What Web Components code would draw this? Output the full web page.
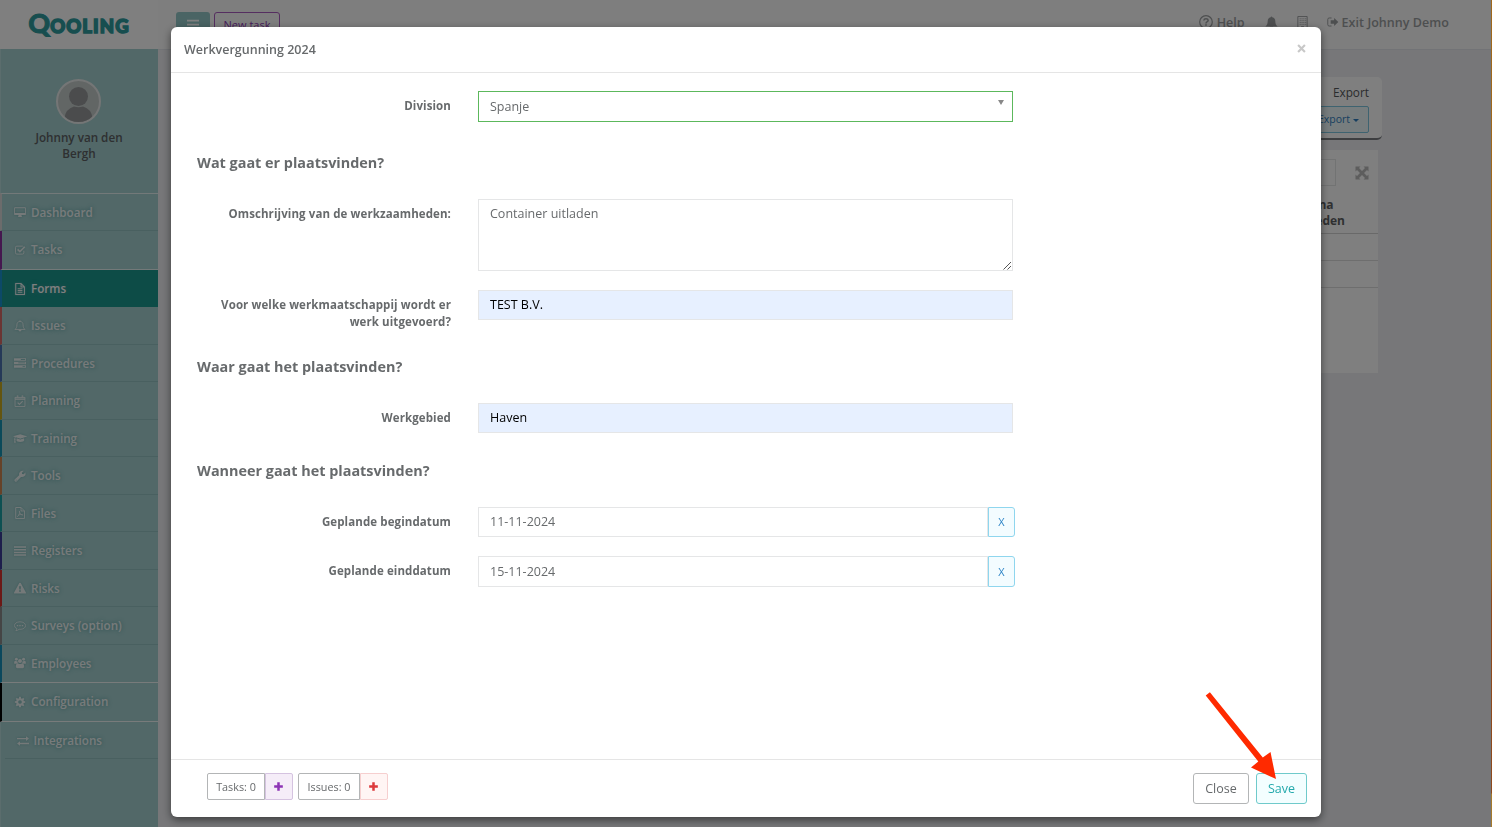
<!DOCTYPE html>
<html lang="nl">
<head>
<meta charset="utf-8">
<title>Werkvergunning 2024</title>
<style>
  html, body { margin: 0; height: 100%; overflow: hidden; }
  body {
    font-family: "Open Sans", "Noto Sans", sans-serif;
    font-size: 12px;
    color: #676a6c;
    background: linear-gradient(#a0681c 0, #a0681c 560px, #8f4a1c 600px, #8f4a1c 793px, #a67a2c 794px);
  }
</style>
</head>
<body>
<app-shell>
  <side-nav slot="nav" user="Johnny van den Bergh"></side-nav>
  <top-bar slot="top"></top-bar>
  <forms-page slot="page"></forms-page>
</app-shell>

<modal-dialog heading="Werkvergunning 2024">
  <form-row label="Division"><form-field kind="select" value="Spanje"></form-field></form-row>
  <section-title style="--gap: 31px">Wat gaat er plaatsvinden?</section-title>
  <form-row label="Omschrijving van de werkzaamheden:"><form-field kind="area" value="Container uitladen"></form-field></form-row>
  <form-row label="Voor welke werkmaatschappij wordt er werk uitgevoerd?" style="margin-top: 19px"><form-field kind="filled" value="TEST B.V."></form-field></form-row>
  <section-title style="--gap: 27px">Waar gaat het plaatsvinden?</section-title>
  <form-row label="Werkgebied"><form-field kind="filled" value="Haven"></form-field></form-row>
  <section-title style="--gap: 28px">Wanneer gaat het plaatsvinden?</section-title>
  <form-row label="Geplande begindatum"><form-field kind="date" value="11-11-2024"></form-field></form-row>
  <form-row label="Geplande einddatum" style="margin-top: 19px"><form-field kind="date" value="15-11-2024" style="--h: 31px; --pb: 0"></form-field></form-row>

  <count-button slot="left" label="Tasks: 0" style="--fg: #8d35b5; --bg: #f5edf8; --line: #d5c3e0; --w: 57px"></count-button>
  <count-button slot="left" label="Issues: 0" style="--fg: #dc3a3c; --bg: #fff5f4; --line: #f6cfcf; --w: 61px"></count-button>
  <action-button slot="right" style="--w: 54px">Close</action-button>
  <action-button slot="right" style="--w: 49px; --fg: #23a9ac; --bg: #f3feff; --line: #6fcacb">Save</action-button>
</modal-dialog>
<pointer-arrow></pointer-arrow>

<script>
/* Icons, all drawn on a 14 unit grid */
const ICONS = {
  desktop: '<path fill-rule="evenodd" d="M1.2 1.5h11.6q1.1 0 1.1 1.1v7q0 1-1.1 1H8.7q.1.8.5 1.4v.7H4.8V12q.4-.6.5-1.4H1.2q-1.1 0-1.1-1v-7q0-1.100 1.100-1.100zM1.100 2.600v5.600h11.800V2.600z"/>',
  check: '<path fill="none" stroke="currentColor" stroke-width="1.100" d="M11.500 7.800v2.400q0 1.600-1.600 1.600H3.300q-1.600 0-1.600-1.600V4.100q0-1.600 1.600-1.600h6.600q.5 0 .9.200"/><path fill="none" stroke="currentColor" stroke-width="1.900" d="M4.200 6.200l2.700 2.700 5.700-5.700"/>',
  file: '<path fill="none" stroke="currentColor" stroke-width="1.200" d="M2 .6h6.200l4 4v8.800H2zM8.200.6v4h4M4.300 6.700h5.500M4.300 8.700h5.500M4.300 10.700h5.500"/>',
  bell: '<path fill="none" stroke="currentColor" stroke-width="1.100" d="M7 1.700c-2.600 0-3.600 2-3.600 3.900 0 2.900-.8 4.100-2.300 5.400h11.800c-1.500-1.300-2.300-2.500-2.300-5.400C10.600 3.700 9.600 1.700 7 1.700z"/><path d="M6.400.4h1.200v1.400H6.400zM5.200 11.500h3.600q0 1.900-1.800 1.900t-1.800-1.900z"/>',
  bellSolid: '<path d="M7 .5q.8 0 .8.9c2.400.5 3.300 2.300 3.300 4.200 0 3 .9 4.300 2.400 5.700H.5c1.500-1.400 2.400-2.700 2.400-5.700 0-1.900.9-3.700 3.300-4.200q0-.9.800-.9zM5.200 11.700h3.600q0 1.900-1.800 1.900t-1.800-1.900z"/>',
  tasks: '<path fill-rule="evenodd" d="M0 1.500h14v2.900H0zM8 2.400v1h5v-1zM0 5.500h14v2.900H0zM5 6.400v1h8v-1zM0 9.500h14v2.900H0zM10 10.400v1h3v-1z"/>',
  calendar: '<path fill="none" stroke="currentColor" d="M1.200 2.700h11.600v10.700H1.200zM1.200 5.200h11.600"/><path fill="none" stroke="currentColor" stroke-width="1.300" d="M4.300 8.900l2 2 3.800-3.800"/><path d="M3.200.3h1.900v3.600H3.200zM8.900.3h1.900v3.600H8.900zM1 2.500h12v1.800H1z" opacity=".8"/>',
  cap: '<path d="M8.500 2.500L17 5.100 8.500 7.800 3.200 6.100Q2.700 6.600 2.600 7.600q.5.300.5.900 0 .5-.4.800l.5 3.200H1.300l.4-3.200q-.4-.3-.4-.8 0-.6.4-.9 0-1.200.5-1.900L0 5.100zM4.200 7.400l4.300 1.400 4.400-1.400.2 2.300q-.4 1.900-4.600 1.900T4 9.700z"/>',
  wrench: '<path fill-rule="evenodd" d="M.7 11.200l5.200-5.200Q5.400 3.500 7.100 1.900 8.900.3 11.500 1L9.200 3.200l.3 1.500 1.600.3L13.400 2.800Q14 5.500 12.300 7.100 10.600 8.700 8.200 8.100L3 13.300q-.9.700-1.600 0L.7 12.700q-.6-.8 0-1.500zM2 11.300v1h1v-1z"/>',
  pdf: '<path fill="none" stroke="currentColor" stroke-width="1.100" d="M2 .6h6.200l4 4v8.800H2zM8.200.6v4h4"/><path fill="none" stroke="currentColor" stroke-width=".9" d="M6.300 4.600c.2 2.800 1.200 4.300 4.200 4.900M6.700 5c0 2.600-1 4.900-3 6.600M4.600 9.700q2.600-1.300 5.400-1"/>',
  lines: '<path d="M0 1.600h14v1.700H0zM0 4.700h14v1.700H0zM0 7.800h14v1.700H0zM0 10.900h14v1.700H0z"/>',
  warning: '<path fill-rule="evenodd" d="M7 .8q.6 0 .9.500l6 11q.5 1-.6 1.100H.7q-1.100-.1-.6-1.100l6-11Q6.400.8 7 .8zM6 4.900l.3 3.900h1.400L8 4.900zM6.100 9.700v1.700h1.800V9.700z"/>',
  comment: '<path fill="none" stroke="currentColor" d="M7 2.100c3.700 0 6.500 1.900 6.500 4.400S10.700 10.900 7 10.900l-1-.1q-1.600 1.400-3.800 1.700.9-1 1.200-2.400Q.5 8.800.5 6.500C.5 4 3.300 2.100 7 2.100z"/><path d="M3.300 5.700h1.600v1.600H3.300zM6.200 5.700h1.600v1.600H6.200zM9.100 5.700h1.600v1.600H9.100z"/>',
  users: '<circle cx="2.800" cy="2.700" r="1.700"/><circle cx="11.200" cy="2.700" r="1.700"/><circle cx="7" cy="4.700" r="2.400"/><path d="M.2 7.500C0 5.300.6 4.300 1.500 4.500q1.300.8 2.500.3-.1 1.500.7 2.300Q3.300 7.200 2.600 8H1Q.3 8 .2 7.500zM13.800 7.500c.2-2.200-.4-3.200-1.300-3q-1.300.8-2.500.3.100 1.500-.7 2.300 1.400.1 2.100.9H13q.7 0 .8-.5zM4.200 7.300Q7 9 9.800 7.300q2 0 2 4.100 0 1.700-1.700 1.700H3.900q-1.700 0-1.700-1.700 0-4.100 2-4.100z"/>',
  cog: '<path fill-rule="evenodd" d="M6 1h2l.3 1.700 1 .4 1.400-1L12.100 3.500l-1 1.400.4 1L13 6.100v1.900l-1.600.3-.4 1 1 1.400-1.300 1.300-1.400-1-1 .4L8 13H6l-.3-1.600-1-.4-1.400 1L2 10.700l1-1.400-.4-1L1 8V6.100l1.600-.3.400-1-1-1.300L3.300 2.100l1.400 1 1-.4zM7 4.900a2.100 2.100 0 1 0 0 4.200 2.100 2.100 0 1 0 0-4.200z"/>',
  exchange: '<path d="M0 3.400h10.500V1.500L14 4.200l-3.500 2.700V5.100H0zM14 9H3.500V7.200L0 9.900l3.500 2.600v-1.800H14z"/>',
  help: '<circle cx="7" cy="7" r="6.300" fill="none" stroke="currentColor" stroke-width="1.200"/><path fill="none" stroke="currentColor" stroke-width="1.500" d="M4.800 5.500Q5 3.700 7 3.700t2.200 1.600Q9.200 6.300 8 6.900q-1 .5-1 1.500"/><path d="M6.200 9.200h1.600v1.600H6.200z"/>',
  building: '<path fill="none" stroke="currentColor" d="M2 .5h10v13H2z"/><path fill="none" stroke="currentColor" stroke-dasharray="1 1" d="M4 3h7M4 5h7M4 7h7M4 9h7"/><path d="M5.500 11h3v2.500h-3z"/>',
  exit: '<path fill="none" stroke="currentColor" stroke-width="1.100" d="M5.300 2.300H2.600Q.9 2.300.9 4v6q0 1.700 1.700 1.700h2.700"/><path d="M4.300 5.100h4V2.200L13.200 7l-4.900 4.800V8.900h-4z"/>',
  expand: '<path d="M.5 5.500v-5h5L4 2l3 3 3-3L8.500.5h5v5L12 4 9 7l3 3 1.500-1.500v5h-5L10 12 7 9l-3 3 1.500 1.500h-5v-5L2 10l3-3-3-3z"/>',
  plus: '<path d="M5.400 1.500h3.200v3.900h3.900v3.200H8.600v3.900H5.400V8.600H1.500V5.400h3.900z"/>'
};

function icon(name, size) {
  var wide = name === "cap";
  var w = wide ? size * 17 / 14 : size;
  return `<svg class="icon ${name}" width="${w}" height="${size}" viewBox="0 0 ${wide ? 17 : 14} 14" fill="currentColor">${ICONS[name]}</svg>`;
}

/* Base class: open shadow root, filled once on connect */
class UiElement extends HTMLElement {
  constructor() {
    super();
    this.attachShadow({ mode: "open" });
  }
  attr(name) { return this.getAttribute(name) || ""; }
  connectedCallback() {
    this.shadowRoot.innerHTML = `<style>*{box-sizing:border-box}svg{display:block;flex:none}${this.styles()}</style>${this.view()}`;
  }
}

class AppShell extends UiElement {
  styles() {
    return `
      :host {
        display: grid;
        grid-template: 50px 1fr / 158px 1fr;
        height: 827px;
        margin-right: 1px;
      }
      slot[name=nav]::slotted(*) { grid-row: 1 / 3; }
    `;
  }
  view() {
    return `<slot name="nav"></slot><slot name="top"></slot><slot name="page"></slot>`;
  }
}

class SideNav extends UiElement {
  styles() {
    return `
      :host { display: flex; flex-direction: column; background: #a4d0d0; box-shadow: inset 1px 0 #b6dada; }
      .logo {
        height: 49px; display: flex; align-items: center; justify-content: center;
        background: #fff; color: #2f9c9f;
      }
      .logo span {
        font: 900 18.500px/1 Lato, "Open Sans", sans-serif; letter-spacing: 1.100px;
        -webkit-text-stroke: 1.500px #2f9c9f; padding-bottom: 4px;
      }
      .logo b { font-size: 27px; font-weight: 900; letter-spacing: 0; -webkit-text-stroke-width: .9px; }
      .user {
        height: 144px; padding-top: 30px;
        display: flex; flex-direction: column; align-items: center;
      }
      .user svg { margin-right: 1px; }
      .user p {
        width: 110px; margin: 5px 0 0; text-align: center;
        font-weight: 600; line-height: 16px; font-size: 11.700px; color: #5d6163;
      }
      .item {
        display: flex; align-items: center; gap: 5px; height: 37.5px;
        padding: 1px 0 0 12px; border-left: 2px solid var(--c);
        border-bottom: 1px solid #93c0c0;
        color: #f0f6f6; font-weight: 600; font-size: 11.650px;
        text-shadow: 0 0 4px #4f9a9c;
      }
      .icon { color: #eaf3f3; filter: drop-shadow(0 0 1px #6fb0b1); }
      .icon.cap { margin: 0 -1.300px; }
      .first { border-top: 1px solid #e6f3f3; height: 38px; padding-top: 0; }
      .check-row { height: 39px; border-bottom-color: #e6f3f3; padding: 0 0 1px 12px; }
      .active { height: 37px; background: #1a988e; color: #fff; border-bottom-color: #1a988e; }
      .emp { height: 38.5px; padding-top: 0; border-bottom-color: #f0f7f7; }
      .conf { height: 39px; border-bottom-color: #f0f7f7; padding: 0 0 1px 12px; }
      .sub { margin-left: 5px; border-left: 0; padding-left: 11.500px; height: 37px; }
    `;
  }
  view() {
    var items = [
      ["desktop", "Dashboard", "#d8d8d8", "first"],
      ["check", "Tasks", "#8a2f9e", "check-row"],
      ["file", "Forms", "#1893d0", "active"],
      ["bell", "Issues", "#d66a66", ""],
      ["tasks", "Procedures", "#4a72b0", ""],
      ["calendar", "Planning", "#c9ab1e", ""],
      ["cap", "Training", "#1595b5", ""],
      ["wrench", "Tools", "#cc8450", ""],
      ["pdf", "Files", "#1aa0a5", ""],
      ["lines", "Registers", "#3a3c98", ""],
      ["warning", "Risks", "#d8322c", ""],
      ["comment", "Surveys (option)", "#8a8a8a", ""],
      ["users", "Employees", "#1590bb", "emp"],
      ["cog", "Configuration", "#000", "conf"],
      ["exchange", "Integrations", "#a4d0d0", "sub"]
    ];
    return `
      <div class="logo"><span><b>Q</b>OOLING</span></div>
      <div class="user">
        <svg width="45" height="45" viewBox="0 0 45 45">
          <defs><clipPath id="face"><circle cx="22.500" cy="22.500" r="20.500"/></clipPath></defs>
          <circle cx="22.500" cy="22.500" r="21.500" fill="#c5cccb" stroke="#e9ecec" stroke-width="2"/>
          <g clip-path="url(#face)" fill="#96999b">
            <circle cx="22.500" cy="17.500" r="9.500"/>
            <path d="M8.500 45V39q1-9 9.500-11.500 4.500 1.500 9 0Q35.500 30 36.500 39v6z"/>
          </g>
        </svg>
        <p>${this.attr("user")}</p>
      </div>
      ${items.map(i => `<div class="item ${i[3]}" style="--c:${i[2]}">${icon(i[0], 12)}<span>${i[1]}</span></div>`).join("")}
    `;
  }
}

class TopBar extends UiElement {
  styles() {
    return `
      :host {
        display: flex; align-items: center; height: 50px; box-sizing: border-box;
        padding: 0 42px 5px 18px; background: #fcfcfc; border-bottom: 1px solid #e4e7ec;
      }
      .menu {
        width: 34px; height: 27px; margin-top: 7px; border-radius: 3px; padding-bottom: 2px;
        background: #94c9c9; color: #fff;
        display: flex; align-items: center; justify-content: center;
      }
      .new {
        width: 66px; height: 27px; margin: 7px auto 0 4px; padding-bottom: 2px;
        display: flex; align-items: center; justify-content: center;
        border: 1px solid #ab5cc0; border-radius: 3px; color: #8d35b5; font-size: 11px;
      }
      .link {
        display: flex; align-items: center; gap: 4px;
        color: #9b9ea0; font-weight: 600; font-size: 12.500px;
      }
    `;
  }
  view() {
    return `
      <div class="menu"><svg width="12" height="12" viewBox="0 0 14 14" fill="currentColor"><path d="M0 1h14v2H0zM0 5.500h14v2H0zM0 10h14v2H0z"/></svg></div>
      <div class="new">New task</div>
      <div class="link">${icon("help", 14)}Help</div>
      <div class="link" style="margin-left:20px">${icon("bellSolid", 13)}</div>
      <div class="link" style="margin-left:18px">${icon("building", 13)}</div>
      <div class="link" style="margin-left:18px;gap:3px">${icon("exit", 12)}<span style="letter-spacing:.05px">Exit Johnny Demo</span></div>
    `;
  }
}

class FormsPage extends UiElement {
  styles() {
    return `
      :host { display: flex; flex-direction: column; align-items: flex-end; padding: 27px 108px 0 18px; background: #eeeff3; }
      .tools {
        width: 300px; height: 63px; padding: 7px 13px 0; margin-right: 1px; background: #fff;
        border-radius: 5px; border-bottom: 2px solid #7a7d80;
        display: flex; flex-direction: column; align-items: flex-end; gap: 6px; color: #55585a;
      }
      .tools span { line-height: 16px; font-size: 11.800px; }
      .btn {
        display: flex; align-items: center; gap: 3px; height: 27px; padding: 0 9px 1px;
        border: 1px solid #7cc6e0; border-radius: 2px; background: #eefafc;
        color: #2f7fc0; font-size: 10.500px;
      }
      .btn::after { content: ""; margin-top: 2px; border: 3px solid transparent; border-top-color: #2f7fc0; border-bottom: 0; }
      .table { width: 300px; height: 223px; margin: 10px 5px 0 0; background: #fff; }
      .search { display: flex; align-items: center; justify-content: flex-end; gap: 19px; padding: 9px 9px 0 0; color: #bbb; }
      .search i { width: 100px; height: 27px; border: 1px solid #e5e6e7; }
      .th {
        height: 48px; padding: 11px 33px 0 0; border-bottom: 1px solid #d2d2d2;
        display: flex; justify-content: flex-end;
        font-weight: 700; line-height: 16px; color: #5e6163;
      }
      .td { height: 27px; border-bottom: 1px solid #dcdcdc; }
    `;
  }
  view() {
    return `
      <div class="tools"><span>Export</span><div class="btn">Export</div></div>
      <div class="table">
        <div class="search"><i></i>${icon("expand", 14)}</div>
        <div class="th"><div>&nbsp;na<br>eden</div></div>
        <div class="td"></div><div class="td"></div>
      </div>
    `;
  }
}

class ModalDialog extends UiElement {
  styles() {
    return `
      :host {
        position: fixed; inset: 0 1px 0 0; display: flex; box-sizing: border-box;
        padding: 27px 170px 10px 171px; background: rgba(0, 0, 0, .5);
      }
      .dialog {
        flex: 1; display: flex; flex-direction: column;
        background: #fff; border-radius: 6px; box-shadow: 0 3px 9px rgba(0, 0, 0, .5);
      }
      header {
        height: 46px; padding: 0 15px 0 13px; border-bottom: 1px solid #e5e5e5;
        display: flex; align-items: center; justify-content: space-between;
        font-weight: 600; font-size: 12.500px;
      }
      header svg { margin-bottom: 3px; }
      main { flex: 1; padding: 18px 26px; }
      footer {
        height: 58px; padding: 13px 14px 0 36px; border-top: 1px solid #e5e5e5;
        display: flex; align-items: flex-start; gap: 5px;
      }
      footer span { flex: 1; }
      slot[name=right]::slotted(*) { margin-left: 2px; }
    `;
  }
  view() {
    return `
      <div class="dialog">
        <header>${this.attr("heading")}
          <svg width="9" height="9" viewBox="0 0 10 10" stroke="#c8c8c8" stroke-width="2.400"><path d="M1.200 1.200l7.600 7.600M8.800 1.200L1.200 8.800"/></svg>
        </header>
        <main><slot></slot></main>
        <footer><slot name="left"></slot><span></span><slot name="right"></slot></footer>
      </div>
    `;
  }
}

class SectionTitle extends UiElement {
  styles() {
    return `
      :host { display: block; margin: var(--gap) 0 27px; height: 19px; line-height: 19px; font-size: 14.400px; font-weight: 700; }
    `;
  }
  view() { return `<slot></slot>`; }
}

class FormRow extends UiElement {
  styles() {
    return `
      :host { display: grid; grid-template-columns: 254px 1fr; column-gap: 27px; }
      label { text-align: right; font-weight: 700; font-size: 11.500px; letter-spacing: .1px; line-height: 17px; padding: 6px 0 0 20px; }
    `;
  }
  view() { return `<label>${this.attr("label")}</label><slot></slot>`; }
}

class FormField extends UiElement {
  styles() {
    return `
      :host { display: flex; width: 537px; font-size: 12.500px; }
      .box {
        width: 535px; height: var(--h, 30px); padding: 0 11px 1px; border: 1px solid #e5e6e7;
        display: flex; align-items: center; justify-content: space-between;
      }
      .select { height: 31px; padding-bottom: 0; border-color: #5cb85c; }
      .select::after { content: ""; margin: -8px -3px 0 0; border: 3.500px solid transparent; border-top: 5px solid #888; border-bottom: 0; }
      .area { height: 72px; align-items: flex-start; padding: 5px 0 0 11px; }
      .area svg { align-self: flex-end; }
      .filled { background: #e7f0ff; color: #000; padding-bottom: 2px; }
      .date { width: 510px; padding-bottom: var(--pb, 2px); }
      .clear {
        width: 27px; height: var(--h, 30px); border: 1px solid #8fd6ee; border-radius: 0 3px 3px 0;
        background: #f3fcff; color: #2f86c8; font-size: 11px; padding-bottom: 1px;
        display: flex; align-items: center; justify-content: center;
      }
    `;
  }
  view() {
    var kind = this.attr("kind");
    var grip = kind === "area" ? '<svg width="10" height="10" viewBox="0 0 10 10" stroke="#555" fill="none"><path d="M1.500 9.500L9 2M5.500 9.500L9 6"/></svg>' : "";
    var clear = kind === "date" ? '<div class="clear">X</div>' : "";
    return `<div class="box ${kind}"><span>${this.attr("value")}</span>${grip}</div>${clear}`;
  }
}

class CountButton extends UiElement {
  styles() {
    return `
      :host { display: flex; height: 27px; font-size: 10.800px; }
      span, div { display: flex; align-items: center; justify-content: center; }
      span { width: calc(var(--w) + 1px); border: 1px solid #b3b5b6; border-radius: 2px 0 0 2px; }
      div { width: 28px; padding-right: 1px; border: 1px solid var(--line); border-radius: 0 2px 2px 0; background: var(--bg); color: var(--fg); }
    `;
  }
  view() { return `<span>${this.attr("label")}</span><div>${icon("plus", 11)}</div>`; }
}

class ActionButton extends UiElement {
  styles() {
    return `
      :host {
        display: flex; align-items: center; justify-content: center; box-sizing: border-box;
        width: calc(var(--w) + 2px); height: 31px; font-size: 12.500px;
        border: 1px solid var(--line, #b3b5b6); border-radius: 3px;
        background: var(--bg, #fff); color: var(--fg, #676a6c);
      }
    `;
  }
  view() { return `<slot></slot>`; }
}

/* Red arrow that floats over the dialog and ends on the Save button */
class PointerArrow extends UiElement {
  styles() { return `:host { position: fixed; left: 1200px; top: 688px; }`; }
  view() {
    return `<svg width="84" height="96" viewBox="0 0 84 96" fill="#ff2a00"><path d="M5.700 7.500L9.900 4.200 62.800 69.600 70.500 64 76 91 51 79.500 58.300 73.500z"/></svg>`;
  }
}

customElements.define("app-shell", AppShell);
customElements.define("side-nav", SideNav);
customElements.define("top-bar", TopBar);
customElements.define("forms-page", FormsPage);
customElements.define("modal-dialog", ModalDialog);
customElements.define("section-title", SectionTitle);
customElements.define("form-row", FormRow);
customElements.define("form-field", FormField);
customElements.define("count-button", CountButton);
customElements.define("action-button", ActionButton);
customElements.define("pointer-arrow", PointerArrow);
</script>
</body>
</html>
